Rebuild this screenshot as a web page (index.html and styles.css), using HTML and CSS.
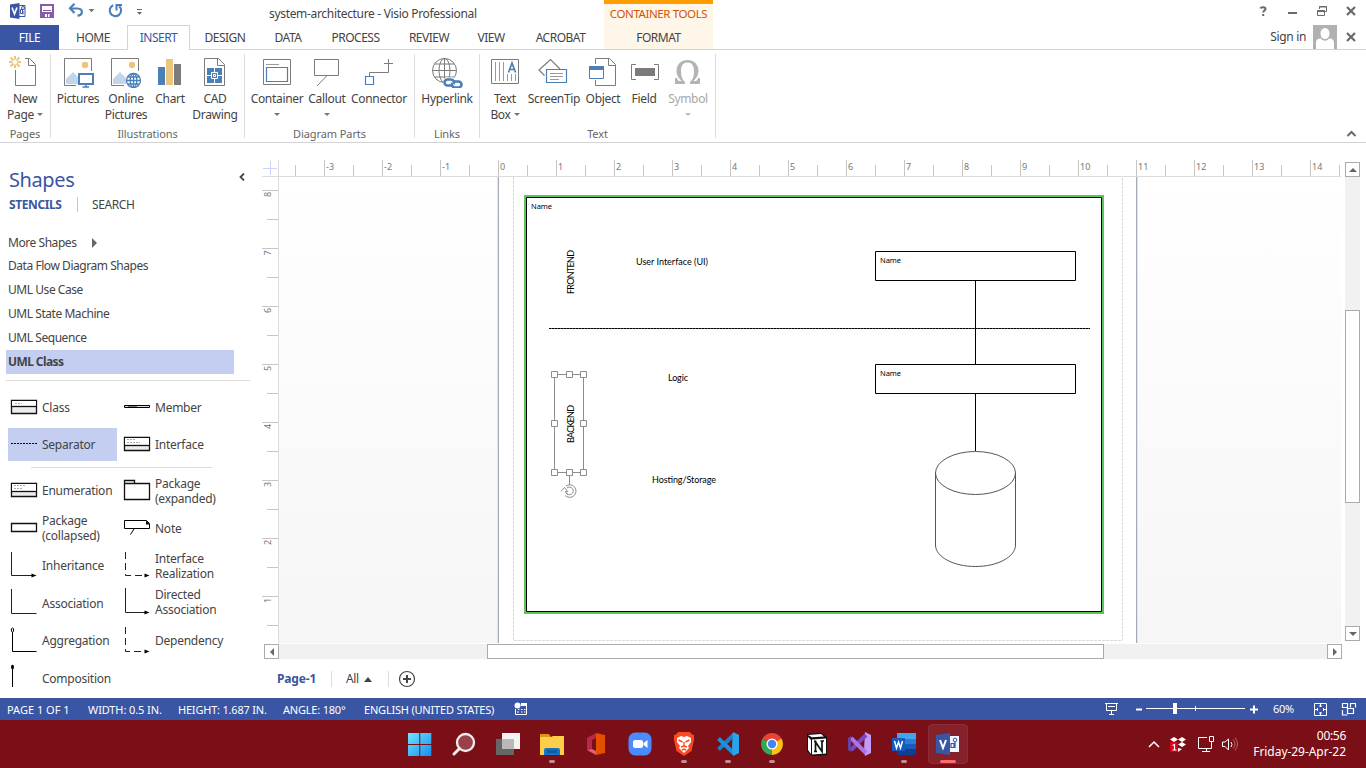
FILE: index.html
```html
<!DOCTYPE html>
<html lang="en">
<head>
<meta charset="utf-8">
<title>system-architecture - Visio Professional</title>
<link rel="stylesheet" href="styles.css">
</head>
<body>
<div class="app">
  <header class="titlebar">
    <div class="quick">
      <svg width="150" height="25" viewBox="0 0 150 25">
        <path d="M18.500 5.500h6.500v11h-6.500z" fill="#fff" stroke="#3955a3"/><path d="M10 4.500l9.500-1.500v16L10 17.500z" fill="#3955a3"/><path d="M12 7.500l2.500 6.500L17 7.500" fill="none" stroke="#fff" stroke-width="1.700"/><circle cx="23" cy="8" r="1.500" fill="none" stroke="#3955a3"/><path d="M20.500 9.500h2v4h-2zM23 14.500V11" fill="none" stroke="#3955a3"/>
        <path d="M41 5h12v12H41z" fill="none" stroke="#8a5bab" stroke-width="2"/><path d="M43 10.500h8" fill="none" stroke="#8a5bab"/><path d="M42 12h10v5H42z" fill="#8a5bab"/><path d="M45 14h2v3h-2zM48 14h1.500v3H48z" fill="#fff"/>
        <path d="M71 8.500h6.500c3.500 0 4.800 2 4.300 4.200-.4 1.800-2 2.800-4.300 3" fill="none" stroke="#4a7fb8" stroke-width="2.200"/><path d="M74.500 3.800L70 8.300l4.500 4.700" fill="none" stroke="#4a7fb8" stroke-width="2.200"/><path d="M88.500 9h6l-3 3.200z" fill="#777"/>
        <path d="M119.200 6.200a5.700 5.700 0 1 1-6-1" fill="none" stroke="#4a7fb8" stroke-width="2.100"/><path d="M116.500 10.500V5h5.500" fill="none" stroke="#4a7fb8" stroke-width="2"/><path d="M137 9.500h5" stroke="#666"/><path d="M137 12h5l-2.500 2.800z" fill="#666"/>
      </svg>
    </div>
    <div class="doc-title">system-architecture - Visio Professional</div>
    <div class="context-head">CONTAINER TOOLS</div>
    <svg class="window-btns" width="110" height="25" viewBox="0 0 110 25" fill="none" stroke="#6a6a6a">
      <path d="M4.500 8.500c.3-1.700 5-2 5 .5 0 1.700-2.300 1.600-2.300 3.500M7.200 14v2" stroke-width="2"/>
      <path d="M32 13h9" stroke-width="2"/>
      <path d="M63.500 9V6.500h7v5h-2.500M63 7h8M61.500 10.500h7v5h-7zM61.500 11.500h7"/>
      <path d="M91 7l8 8M99 7l-8 8" stroke-width="2.200"/>
    </svg>
  </header>
  <nav class="tabs">
    <div class="tab file">FILE</div><div class="tab w68">HOME</div><div class="tab active">INSERT</div><div class="tab w70">DESIGN</div><div class="tab w56">DATA</div><div class="tab w79">PROCESS</div><div class="tab w68">REVIEW</div><div class="tab w56">VIEW</div><div class="tab w83">ACROBAT</div><div class="tab format">FORMAT</div>
    <div class="account"><span>Sign in</span>
      <svg width="24" height="24" viewBox="0 0 24 24"><path fill="#b1b1b1" d="M0 0h24v24H0z"/><ellipse cx="12" cy="8.500" rx="4.500" ry="5.500" fill="#fff"/><path d="M3 24v-6c0-4 3-4.500 5-4.500 2 3 6 3 8 0 2 0 5 .5 5 4.500v6z" fill="#fff"/></svg>
      <svg width="10" height="10" viewBox="0 0 10 10"><path d="M1 1l8 8M9 1L1 9" stroke="#6a6a6a" stroke-width="2.200"/></svg>
    </div>
  </nav>
  <section class="ribbon">
    <div class="group g-pages"><div class="btns">
      <div class="btn b50"><svg class="ico" viewBox="0 0 32 32"><path d="M16 2.500h4.500l6 6v21h-20V14" fill="none" stroke="#7b7b7b"/><path d="M19.500 2.500v7h7" fill="none" stroke="#7b7b7b"/><g stroke="#ecc57c" stroke-width="2"><path d="M6 0v3.500M6 8.500V12M0 6h3.500M8.500 6H12M1.500 1.500l3 3M7.500 7.500l3 3M1.500 10.500l3-3M7.500 4.500l3-3"/></g></svg><span>New<br>Page<i class="down"></i></span></div>
    </div><div class="glabel">Pages</div></div>
    <div class="group g-ill"><div class="btns">
      <div class="btn b50"><svg class="ico" viewBox="0 0 32 32"><path d="M14 29.500H2.500v-27h27V15" fill="none" stroke="#7b7b7b"/><circle cx="23" cy="9" r="3.200" fill="#ecc57c"/><path d="M4 28v-5l7-7 5 5v7z" fill="#c3d5ea"/><path d="M17 18h14v10H17z" fill="#fff" stroke="#4a7fb8" stroke-width="2"/><path d="M24 28v3M20.500 31h6.500" stroke="#4a7fb8" stroke-width="1.500"/></svg><span>Pictures</span></div>
      <div class="btn b46"><svg class="ico" viewBox="0 0 32 32"><path d="M14 29.500H1.500v-27h27V15" fill="none" stroke="#7b7b7b"/><circle cx="22" cy="9" r="3.200" fill="#ecc57c"/><path d="M3 28v-5l7-7 6 6v6z" fill="#c3d5ea"/><g fill="#fff" stroke="#4a7fb8" stroke-width="1.300"><circle cx="23.500" cy="24.500" r="7"/><ellipse cx="23.500" cy="24.500" rx="3.300" ry="7"/><path d="M16.500 24.500h14M23.500 17.500v14M18 21h11M18 28h11"/></g></svg><span>Online<br>Pictures</span></div>
      <div class="btn b42"><svg class="ico" viewBox="0 0 32 32"><path d="M4 11h7v18H4z" fill="#4a7fb8"/><path d="M12 3h7v26h-7z" fill="#ecc57c"/><path d="M20 8h7v21h-7z" fill="#7b7b7b"/></svg><span>Chart</span></div>
      <div class="btn b48"><svg class="ico" viewBox="0 0 32 32"><path d="M5.500 2.500h14l6 6v21h-20z" fill="none" stroke="#7b7b7b"/><path d="M18.500 2.500v7h7" fill="none" stroke="#7b7b7b"/><path d="M8 12h15v15H8z" fill="#4a7fb8"/><path d="M12.500 16.500h6v6h-6zM15.500 12v4M15.500 23v4M8 19.500h4M19 19.500h4" fill="none" stroke="#fff"/><path d="M14.500 18.500h2v2h-2z" fill="#4a7fb8" stroke="#fff"/></svg><span>CAD<br>Drawing</span></div>
    </div><div class="glabel">Illustrations</div></div>
    <div class="group g-parts"><div class="btns">
      <div class="btn b56"><svg class="ico" viewBox="0 0 32 32" fill="none"><path d="M2.500 3.500h27v25h-27z" stroke="#7b7b7b"/><path d="M5 8.500h13" stroke="#9a9a9a"/><path d="M5.500 11.500h21v14h-21z" stroke="#4a7fb8" stroke-width="1.200"/></svg><span>Container<br><i class="down solo"></i></span></div>
      <div class="btn b44"><svg class="ico" viewBox="0 0 32 32" fill="none" stroke="#7b7b7b"><path d="M3.500 3.500h24v16h-24zM16 19.500L6 30"/></svg><span>Callout<br><i class="down solo"></i></span></div>
      <div class="btn b60"><svg class="ico" viewBox="0 0 32 32" fill="none" stroke="#7b7b7b"><path d="M25.500 3v9M21 7.500h9M25.500 12v4.500h-19V20"/><path d="M2.500 20.500h8v8h-8z" stroke="#4a7fb8" stroke-width="1.200"/></svg><span>Connector</span></div>
    </div><div class="glabel">Diagram Parts</div></div>
    <div class="group g-links"><div class="btns">
      <div class="btn b64"><svg class="ico" viewBox="0 0 32 32" fill="none"><g stroke="#7b7b7b"><circle cx="13.500" cy="14.500" r="12"/><ellipse cx="13.500" cy="14.500" rx="5.500" ry="12"/><path d="M13.500 2.500v24M1.500 14.500h24M3.500 8h20M3.500 21h20"/></g><path d="M14 21.500h17l1.500 3v8H12.500v-8z" fill="#fff"/><g stroke="#4a7fb8" stroke-width="2.600"><path d="M21 29.500h-4.500a3 3 0 0 1 0-6h3.500a3 3 0 0 1 2.600 4.500"/><path d="M23 25.500h4.500a3 3 0 0 1 0 6H24a3 3 0 0 1-2.600-4.500"/></g></svg><span>Hyperlink</span></div>
    </div><div class="glabel">Links</div></div>
    <div class="group g-text"><div class="btns">
      <div class="btn b38"><svg class="ico" viewBox="0 0 32 32" fill="none"><path d="M2.500 3.500h27v24h-27z" stroke="#7b7b7b"/><path d="M6.500 6v19M10.500 6v19M14.500 6v19M18.500 18v7M22.500 18v7M26.500 18v7" stroke="#9a9a9a"/><path d="M19.500 16.500L23 7l3.500 9.500M20.500 13.500h5" stroke="#4a7fb8" stroke-width="1.700"/></svg><span>Text<br>Box<i class="down"></i></span></div>
      <div class="btn b60"><svg class="ico" viewBox="0 0 32 32" fill="none"><path d="M6.500 19.500L1 14 12.500 3.500 22 13" stroke="#7b7b7b" stroke-width="1.200"/><path d="M8.500 13.500h20v13h-20z" fill="#fff" stroke="#4a7fb8" stroke-width="1.200"/><path d="M12 17.500h13M12 20.500h13M12 23.500h9" stroke="#9a9a9a"/></svg><span>ScreenTip</span></div>
      <div class="btn b38"><svg class="ico" viewBox="0 0 32 32" fill="none"><path d="M8.500 8V2.500h14l6 6v21h-20V24M21.500 2.500v7h7" stroke="#7b7b7b"/><path d="M2.500 10.500h14v12h-14z" fill="#fff" stroke="#4a7fb8"/><path d="M2 10h15v4H2z" fill="#4a7fb8"/></svg><span>Object</span></div>
      <div class="btn b44"><svg class="ico" viewBox="0 0 32 32" fill="none"><path d="M8 8.500H3.500v15H8M26 8.500h4.500v15H26" stroke="#7b7b7b"/><path d="M7 12h20v8H7z" fill="#7b7b7b"/></svg><span>Field</span></div>
      <div class="btn b44 off"><svg class="ico" viewBox="0 0 32 32"><path d="M3 22h2c.5 2.500 1.500 3 3.500 3h1c-3-3-5-6-5-10C4.500 8.500 9 4 15.500 4S26.500 8.500 26.500 15c0 4-2 7-5 10h1c2 0 3-.5 3.500-3h2v6H18v-2c2.500-2 4-5.500 4-10.500 0-6-2.300-9-6.500-9S9 9.500 9 15.500C9 20.500 10.500 24 13 26v2H3z" fill="#b4b4b4"/></svg><span>Symbol<br><i class="down solo"></i></span></div>
    </div><div class="glabel">Text</div></div>
    <svg class="collapse" width="11" height="8" viewBox="0 0 11 8"><path d="M1.500 6l4-4 4 4" fill="none" stroke="#6a6a6a" stroke-width="2"/></svg>
  </section>

  <main class="work">
    <aside class="shapes">
      <div class="shapes-head"><h1>Shapes</h1><svg width="6" height="8" viewBox="0 0 6 8"><path d="M5 .5L1.500 4 5 7.500" fill="none" stroke="#444" stroke-width="1.800"/></svg></div>
      <div class="switch"><b>STENCILS</b><span>SEARCH</span></div>
      <ul class="stencils"><li class="more">More Shapes<i class="right"></i></li><li>Data Flow Diagram Shapes</li><li>UML Use Case</li><li>UML State Machine</li><li>UML Sequence</li><li class="sel">UML Class</li></ul>
      <div class="masters">
        <div class="m"><svg class="mi" viewBox="0 0 28 28"><path d="M1.500 6.500h25v13h-25z" fill="#ececec" stroke="#111" stroke-width="1.300"/><path d="M2 7h24v5H2z" fill="#fff"/><path d="M1.500 12.500h25" stroke="#111" stroke-width="1.300"/><path d="M5 9.500h7" stroke="#aaa" stroke-dasharray="2 1"/></svg><span>Class</span></div>
        <div class="m"><svg class="mi" viewBox="0 0 28 28"><path d="M1.500 11.500h25v2h-25z" fill="#ddd" stroke="#000"/><path d="M5 12.500h9" stroke="#777"/></svg><span>Member</span></div>
        <div class="m picked"><svg class="mi" viewBox="0 0 28 28"><path d="M1 12.500h26" stroke="#000" stroke-dasharray="2 1"/></svg><span>Separator</span></div>
        <div class="m"><svg class="mi" viewBox="0 0 28 28"><path d="M1.500 6.500h25v13h-25z" fill="#ececec" stroke="#111" stroke-width="1.300"/><path d="M2 7h24v7H2z" fill="#fff"/><path d="M1.500 14.500h25" stroke="#111" stroke-width="1.300"/><path d="M4 8.500h9M4 11.500h13" stroke="#aaa" stroke-dasharray="2 1"/></svg><span>Interface</span></div>
      </div>
      <div class="rule"></div>
      <div class="masters second">
        <div class="m"><svg class="mi" viewBox="0 0 28 28"><path d="M1.500 6.500h25v13h-25z" fill="#ececec" stroke="#111" stroke-width="1.300"/><path d="M2 7h24v7H2z" fill="#fff"/><path d="M1.500 14.500h25" stroke="#111" stroke-width="1.300"/><path d="M4 8.500h11M4 11.500h9" stroke="#aaa" stroke-dasharray="2 1"/></svg><span>Enumeration</span></div>
        <div class="m"><svg class="mi" viewBox="0 0 28 28"><path d="M1.500 6.500h25v16h-25zM1.500 6.500v-3h10v3" fill="#fff" stroke="#111" stroke-width="1.300"/></svg><span>Package<br>(expanded)</span></div>
        <div class="m"><svg class="mi" viewBox="0 0 28 28"><path d="M1.500 9.500h25v8h-25z" fill="#fff" stroke="#111" stroke-width="1.300"/></svg><span>Package<br>(collapsed)</span></div>
        <div class="m"><svg class="mi" viewBox="0 0 28 28"><path d="M1.500 6.500h22l3 3v5h-25zM11 15l-3.500 5.500" fill="none" stroke="#000"/><path d="M23 6.500l4 4h-4z"/></svg><span>Note</span></div>
        <div class="m"><svg class="mi" viewBox="0 0 28 28"><path d="M1.500 0v23.500h21" fill="none" stroke="#222"/><path d="M21.500 21.500l5 2-5 2z"/></svg><span>Inheritance</span></div>
        <div class="m"><svg class="mi" viewBox="0 0 28 28"><path d="M2.500 0v23.500h20" fill="none" stroke="#222" stroke-dasharray="7 4"/><path d="M21.500 21.500l5 2-5 2z"/></svg><span>Interface<br>Realization</span></div>
        <div class="m"><svg class="mi" viewBox="0 0 28 28"><path d="M1.500 0v24.500h25" fill="none" stroke="#222"/></svg><span>Association</span></div>
        <div class="m up1"><svg class="mi" viewBox="0 0 28 28"><path d="M2.500 0v24.500h20" fill="none" stroke="#222"/><path d="M21.500 22.500l5 2-5 2z"/></svg><span>Directed<br>Association</span></div>
        <div class="m"><svg class="mi" viewBox="0 0 28 28"><path d="M2.500 5v19.500h24" fill="none" stroke="#000"/><ellipse cx="2.500" cy="3" rx="1.200" ry="2" fill="#fff" stroke="#000"/></svg><span>Aggregation</span></div>
        <div class="m"><svg class="mi" viewBox="0 0 28 28"><path d="M2.500 0v24.500h20" fill="none" stroke="#222" stroke-dasharray="7 4"/><path d="M21.500 22.500l5 2-5 2z"/></svg><span>Dependency</span></div>
        <div class="m"><svg class="mi" viewBox="0 0 28 28"><path d="M2.500 4v19" stroke="#000"/><ellipse cx="2.500" cy="3" rx="1.500" ry="2.300"/></svg><span>Composition</span></div>
      </div>
    </aside>

    <section class="drawing">
      <svg class="corner" viewBox="0 0 17 17" fill="none"><path d="M1 8.500h14M8.500 1v14" stroke="#ccd3fa"/><path d="M0 16.500h17M16.500 0v17" stroke="#dcdcdc"/></svg>
      <svg class="ruler-h" viewBox="279 160 1062 17">
        <defs><pattern id="th" x="324" y="160" width="58" height="17" patternUnits="userSpaceOnUse"><path d="M.5 0v16M29.500 5v11" stroke="#c6c6c6"/></pattern></defs>
        <path d="M279 160h1062v17H279z" fill="url(#th)"/><path d="M279 176.500h1062" stroke="#dcdcdc"/>
        <g class="rnum"><text x="326" y="170">-3</text><text x="384" y="170">-2</text><text x="442" y="170">-1</text><text x="500" y="170">0</text><text x="558" y="170">1</text><text x="616" y="170">2</text><text x="674" y="170">3</text><text x="732" y="170">4</text><text x="790" y="170">5</text><text x="848" y="170">6</text><text x="906" y="170">7</text><text x="964" y="170">8</text><text x="1022" y="170">9</text><text x="1080" y="170">10</text><text x="1138" y="170">11</text><text x="1196" y="170">12</text><text x="1254" y="170">13</text><text x="1312" y="170">14</text></g>
      </svg>
      <svg class="ruler-v" viewBox="262 177 17 466">
        <defs><pattern id="tv" x="262" y="190" width="17" height="58" patternUnits="userSpaceOnUse"><path d="M0 .5h16M5 29.500h11" stroke="#c6c6c6"/></pattern></defs>
        <path d="M262 177h17v466h-17z" fill="url(#tv)"/><path d="M278.500 177v466" stroke="#dcdcdc"/>
        <g class="rnum"><text transform="translate(270.500 197) rotate(-90)">8</text><text transform="translate(270.500 255.500) rotate(-90)">7</text><text transform="translate(270.500 313) rotate(-90)">6</text><text transform="translate(270.500 371) rotate(-90)">5</text><text transform="translate(270.500 429) rotate(-90)">4</text><text transform="translate(270.500 487) rotate(-90)">3</text><text transform="translate(270.500 545) rotate(-90)">2</text><text transform="translate(270.500 603) rotate(-90)">1</text></g>
      </svg>
      <svg class="canvas" viewBox="279 177 1062 466">
        <defs><linearGradient id="bg" x2="0" y2="1"><stop stop-color="#fff"/><stop offset="1" stop-color="#f6f6f6"/></linearGradient></defs>
        <path d="M279 177h1062v466H279z" fill="url(#bg)"/>
        <path d="M497.500 177v466M1137.500 177v466" stroke="#e3e5e8"/>
        <path d="M498 177h638v466H498z" fill="#fff"/>
        <path d="M498.500 177v466M1136.500 177v466" stroke="#a3abb5"/>
        <path d="M513.500 177v463.500h609V177" fill="none" stroke="#dadada" stroke-dasharray="3 1"/>
        <path d="M525 196h578v417H525z" fill="#fff" stroke="#5bc45b" stroke-width="2"/>
        <path d="M526.500 197.500h575v414h-575z" fill="none" stroke="#000"/>
        <path d="M549 328.500h541" stroke="#555"/><path d="M549 328.500h541" stroke="#000" stroke-dasharray="2 1"/>
        <path d="M975.500 280v84M975.500 394v57" stroke="#000"/>
        <path d="M875.500 251.500h200v29h-200zM875.500 364.500h200v29h-200z" fill="#fff" stroke="#000"/>
        <g fill="none" stroke="#555"><ellipse cx="975.500" cy="473" rx="40" ry="21.500"/><path d="M935.500 473v72c0 11.900 17.900 21.500 40 21.500s40-9.600 40-21.500v-72"/></g>
        <g class="dtext"><text x="531" y="209" class="nm" textLength="21">Name</text><text x="880" y="263" class="nm" textLength="21">Name</text><text x="880" y="376" class="nm" textLength="21">Name</text>
        <text x="636" y="265" textLength="72">User Interface (UI)</text><text x="668" y="381" textLength="20">Logic</text><text x="652" y="483" textLength="64">Hosting/Storage</text>
        <text transform="translate(574 294) rotate(-90)" textLength="44">FRONTEND</text><text transform="translate(574 443) rotate(-90)" textLength="38">BACKEND</text></g>
        <g fill="none" stroke="#8d8d8d"><path d="M554.500 374.500h29v98h-29zM569.500 475v10"/><g fill="#fff"><path d="M551.500 371.500h6v6h-6zM566.500 371.500h6v6h-6zM580.500 371.500h6v6h-6zM551.500 420.500h6v6h-6zM580.500 420.500h6v6h-6zM551.500 469.500h6v6h-6zM566.500 469.500h6v6h-6zM580.500 469.500h6v6h-6z"/></g><path d="M566 486a6.300 6.300 0 1 1-.8 9.500M567 488a3.800 3.800 0 1 1-1 4.500M560.800 491.500l3.700-4 3.200 4h-2.200q.5 2.500 2.500 3"/></g>
      </svg>
      <div class="vscroll"><div class="sb"><i class="a up"></i></div><div class="vthumb"></div><div class="sb"><i class="a dn"></i></div></div>
      <div class="hscroll"><div class="sb"><i class="a lf"></i></div><div class="hthumb"></div><div class="sb"><i class="a rt"></i></div></div>
      <div class="pages"><b>Page-1</b><span class="all">All<i></i></span><svg width="18" height="18" viewBox="0 0 18 18" fill="none" stroke="#444"><circle cx="9" cy="9" r="7.500" stroke-width="1.200"/><path d="M9 5v8M5 9h8" stroke-width="2"/></svg></div>
    </section>
  </main>

  <footer class="status">
    <span class="s1">PAGE 1 OF 1</span><span class="s2">WIDTH: 0.5 IN.</span><span class="s3">HEIGHT: 1.687 IN.</span><span class="s4">ANGLE: 180°</span><span class="s5">ENGLISH (UNITED STATES)</span>
    <svg width="14" height="14" viewBox="0 0 14 14"><circle cx="3.500" cy="3.500" r="3" fill="#fff"/><path d="M7 1h6v3H7z" fill="#fff"/><path d="M1.500 7v5.500h11V3M4 7.500h1.500M7 7.500h1.500M10 7.500h1.500M3 10h2M7 10h1.500M10 10h1.500" fill="none" stroke="#fff"/></svg>
    <svg class="zoombar" width="262" height="22" viewBox="1104 698 262 22" fill="none" stroke="#fff"><path d="M1105 703.500h13M1106.500 704v6.500h10V704M1108 706.500h7M1111.500 711v3.500M1109 714.500h5"/><path d="M1136 709.500h6M1250 709.500h8M1254 705.500v8" stroke-width="2"/><path d="M1146 708.500h99M1195.500 706v5"/><path d="M1173 703h4v11h-4z" fill="#fff" stroke="none"/><text x="1273" y="713" textLength="21">60%</text><path d="M1314.500 703.500h12v12h-12zM1320.500 704v3M1320.500 712v3M1315 709.500h3M1323 709.500h3M1319 706h3M1319 713h3M1317.500 708v3M1323.500 708v3"/><path d="M1342.500 707.500v-4h5v4zM1350.500 707.500v-4h5v4M1347.500 708.500h6v5h-6zM1342.500 710v5h5" stroke-width="1.200"/></svg>
  </footer>

  <div class="taskbar">
    <div class="dock">
      <div class="app-btn"><svg viewBox="0 0 24 24"><defs><linearGradient id="win" x2="1" y2="1"><stop stop-color="#6de6ff"/><stop offset="1" stop-color="#168df0"/></linearGradient></defs><path d="M0 1h11.300v11H0zM12.300 1h11v11h-11zM0 13h11.300v11H0zM12.300 13h11v11h-11z" fill="url(#win)"/></svg></div>
      <div class="app-btn"><svg viewBox="0 0 24 24"><circle cx="13.500" cy="10.500" r="8.500" fill="#9a4049" stroke="#eee" stroke-width="2.300"/><path d="M7.500 16.500L2 22" stroke="#eee" stroke-width="3" stroke-linecap="round"/></svg></div>
      <div class="app-btn"><svg viewBox="0 0 24 24"><path d="M6 1h18v16H6z" fill="#f3f3f3"/><path d="M0 7h18v16H0z" fill="#666"/><path d="M6 7h12v10H6z" fill="#b9b9b9"/></svg></div>
      <div class="app-btn run"><svg viewBox="0 0 24 24"><path d="M0 2h9l2 3H0z" fill="#d99a10"/><path d="M0 5h11l2-1h11v19H0z" fill="#fdcf48"/><path d="M4 23v-5q0-2 2-2h12q2 0 2 2v5z" fill="#1673c7"/><path d="M7 18h10v3H7z" fill="#105b9d"/></svg></div>
      <div class="app-btn"><svg viewBox="0 0 24 24"><path d="M3 6l9-5v5L8 8v9l-5 1z" fill="#b52a48"/><path d="M12 1l9 2v18l-9 2z" fill="#e35100"/><path d="M3 18l5-1 4 2v4z" fill="#e0607c"/></svg></div>
      <div class="app-btn"><svg viewBox="0 0 24 24"><rect x=".5" y=".5" width="23" height="23" rx="7" fill="#4a8cff"/><rect x="5" y="8" width="10" height="8" rx="2" fill="#fff"/><path d="M15.500 11l4-3v8l-4-3z" fill="#fff"/></svg></div>
      <div class="app-btn run"><svg viewBox="0 0 24 24"><path d="M6 0h12l2 2.500 2 .5v5l-2.500 11L12 24l-7.500-5L2 8V3l2-.5z" fill="#fb4a20"/><path d="M5 6l4-2 3 1 3-1 4 2 0 4-3 4 1 2-5 5-5-5 1-2-3-4z" fill="#fff"/><path d="M6.500 8l4 2M17.500 8l-4 2M12 10v5M9 15l3-1 3 1M10 18l2-1 2 1" fill="none" stroke="#fb4a20" stroke-width="1.400"/></svg></div>
      <div class="app-btn run"><svg viewBox="0 0 24 24"><path d="M17 0l6 3v18l-6 3-1-6z" fill="#28a4ea"/><path d="M17.500 3L2.500 17.500" stroke="#1681cc" stroke-width="4"/><path d="M17.500 21L2.500 6.500" stroke="#1b91da" stroke-width="4"/><path d="M17.500 1v22" stroke="#28a4ea" stroke-width="2"/></svg></div>
      <div class="app-btn run"><svg viewBox="0 0 24 24"><path d="M12 12L2.500 6.500A11 11 0 0 1 21.500 6.500z" fill="#ea4335"/><path d="M12 12l9.500-5.500A11 11 0 0 1 12 23z" fill="#fbc116"/><path d="M12 12v11A11 11 0 0 1 2.500 6.500z" fill="#34a853"/><circle cx="12" cy="12" r="5.500" fill="#fff"/><circle cx="12" cy="12" r="4.200" fill="#4285f4"/></svg></div>
      <div class="app-btn"><svg viewBox="0 0 24 24"><path d="M3 2l14-1 6 4v18l-15 1-5-5z" fill="#111"/><path d="M4 3l13-1 3 2.500-12 .8z" fill="#fff"/><path d="M4 5l3 3v14l-3-4zM8 7.500l14-1v15l-14 1z" fill="#fff"/><path d="M11.500 19.500V10l6.500 9.500V9M10 9.500h2.500M16.500 9h3.500M10 19.500h3" fill="none" stroke="#111" stroke-width="1.700"/></svg></div>
      <div class="app-btn"><svg viewBox="0 0 24 24"><path d="M17 0l6 3v18l-6 3-1-6z" fill="#c39af5"/><path d="M18 3L3 18" stroke="#7a47bd" stroke-width="4"/><path d="M3 6l15 15" stroke="#a675e8" stroke-width="4"/><path d="M0 6l3-2v16l-3-2z" fill="#6940a5"/></svg></div>
      <div class="app-btn run"><svg viewBox="0 0 24 24"><path d="M5 1h19v6H5z" fill="#41a5ee"/><path d="M5 7h19v5H5z" fill="#2b7cd3"/><path d="M5 12h19v5H5z" fill="#185abd"/><path d="M5 17h19v6H5z" fill="#103f91"/><path d="M0 6h13v13H0z" fill="#185abd"/><path d="M2.500 9l2 7 2-6 2 6 2-7" fill="none" stroke="#fff" stroke-width="1.500"/></svg></div>
      <div class="app-btn current"><svg viewBox="0 0 24 24"><path d="M12 4h11v16H12z" fill="#f4f6ff"/><path d="M0 3l14-2v22L0 21z" fill="#3955a3"/><path d="M4 8l3 8 3-8" fill="none" stroke="#fff" stroke-width="2"/><circle cx="19" cy="8" r="1.800" fill="none" stroke="#3955a3"/><path d="M19 10v5.500h-1M15 11.500h3v4h-3z" fill="none" stroke="#3955a3" stroke-width="1.200"/></svg></div>
    </div>
    <svg class="tray" width="96" height="48" viewBox="1146 720 96 48" fill="none" stroke="#fff"><path d="M1149 747l5-5 5 5" stroke-width="1.500"/><path d="M1174 737l4 2.500-4 2.500-4-2.500zM1182 737l4 2.500-4 2.500-4-2.500zM1182 742l4 2.500-4 2.500-4-2.500zM1178 748l4 1-4 3z" fill="#fff" stroke="none"/><path d="M1170 742h8v10h-8z" fill="#d9001b" stroke="none"/><path d="M1172.500 745.500l2-1v5.500M1172.500 750h4" stroke-width="1.200"/><path d="M1207 737.500h-8.500v11h13V743M1202 751.500h8M1206.500 749v2.500M1209.500 736.500h4v5h-4zM1211.500 741.500v5"/><path d="M1222.500 742v4.500h2.500l3.500 3.500v-11l-3.500 3z"/><path d="M1231 742q2 2.500 0 5"/><path d="M1233 739.500q4 4.500 0 9M1235 737.500q5 6.500 0 13" stroke="#b8646b"/></svg>
    <div class="clock"><span>00:56</span><br>Friday-29-Apr-22</div>
  </div>
</div>
</body>
</html>
```
FILE: styles.css
```css
* { box-sizing: border-box; margin: 0; padding: 0; }
body { font-family: "Noto Sans", "Open Sans", sans-serif; font-size: 12px; letter-spacing: -0.32px; color: #444; background: #fff; overflow: hidden; }
svg { display: block; flex: none; }
.app { width: 1366px; height: 768px; display: flex; flex-direction: column; }

.titlebar { height: 25px; display: flex; flex: none; }
.quick { width: 150px; }
.doc-title { width: 454px; padding-left: 119px; line-height: 27px; white-space: nowrap; }
.context-head { width: 109px; background: #fff6ea; border-top: 4px solid #ff9c00; color: #d35400; text-align: center; line-height: 19px; font-size: 11.5px; letter-spacing: -0.4px; }
.window-btns { margin-left: auto; }

.tabs { height: 25px; display: flex; flex: none; border-bottom: 1px solid #d4d4d4; }
.tab { text-align: center; line-height: 25px; height: 24px; letter-spacing: -0.5px; }
.file { width: 59px; background: #3955a3; color: #fff; height: 25px; }
.active { width: 63px; border: 1px solid #d4d4d4; border-bottom: 0; background: #fff; height: 25px; color: #3955a3; line-height: 23px; }
.w68 { width: 68px; }
.w70 { width: 70px; }
.w56 { width: 56px; }
.w79 { width: 79px; }
.w83 { width: 83px; }
.format { width: 109px; background: #fff6ea; margin-left: 2px; }
.account { margin-left: auto; display: flex; align-items: center; line-height: 24px; padding-right: 10px; }
.account span { margin-right: 7px; }
.account svg + svg { margin-left: 9px; }

.ribbon { height: 93px; display: flex; flex: none; border-bottom: 1px solid #d4d4d4; padding: 4px 0 5px; }
.group { height: 84px; border-right: 1px solid #dcdcdc; display: flex; flex-direction: column; }
.btns { display: flex; height: 72px; flex: none; padding-top: 2px; }
.btn { display: flex; flex-direction: column; align-items: center; text-align: center; line-height: 16px; white-space: nowrap; }
.btn span { margin-top: 3px; }
.ico { width: 32px; height: 32px; }
.glabel { text-align: center; color: #666; font-size: 11px; letter-spacing: -0.1px; height: 16px; line-height: 16px; }
.g-pages { width: 51px; }
.g-ill { width: 194px; }
.g-ill .btns { padding-left: 2px; }
.g-parts { width: 170px; }
.g-parts .btns { padding-left: 4px; }
.g-links { width: 65px; }
.g-text { width: 236px; }
.g-text .btns { padding-left: 6px; }
.b38 { width: 38px; }
.b42 { width: 42px; }
.b44 { width: 44px; }
.b46 { width: 46px; }
.b48 { width: 48px; }
.b50 { width: 50px; }
.b56 { width: 56px; }
.b60 { width: 60px; }
.b64 { width: 64px; }
.off { color: #a6a6a6; }
.down { display: inline-block; border: 3px solid transparent; border-top-color: #777; border-bottom: 0; margin-left: 3px; vertical-align: 3px; }
.off .down { border-top-color: #bbb; }
.solo { margin-left: 0; }
.collapse { margin: 76px 9px 0 auto; }

.work { height: 555px; flex: none; display: flex; }
.shapes { width: 262px; padding-top: 24px; }
.shapes-head { display: flex; height: 26px; padding: 0 17px 0 9px; }
.shapes-head svg { margin: 6px 0 0 auto; }
h1 { font-size: 20px; font-weight: 400; color: #3955a3; line-height: 26px; letter-spacing: -0.4px; }
.switch { display: flex; height: 23px; line-height: 23px; padding-left: 9px; letter-spacing: -0.4px; }
.switch b { color: #3955a3; width: 69px; border-right: 1px solid #c6c6c6; height: 15px; margin-top: 4px; line-height: 15px; white-space: nowrap; }
.switch span { padding-left: 14px; }
.stencils { list-style: none; width: 244px; margin-left: 6px; padding: 14px 0 6px; border-bottom: 1px solid #dcdcdc; letter-spacing: -0.45px; }
.stencils li { height: 24px; line-height: 24px; padding-left: 2px; width: 228px; }
.stencils .more { line-height: 26px; }
.stencils .sel { background: #c3cef1; font-weight: 700; letter-spacing: -0.6px; }
.right { display: inline-block; border: 5px solid transparent; border-left-color: #666; border-right: 0; margin-left: 16px; vertical-align: -1px; }
.masters { display: grid; grid-template-columns: 113px 113px; grid-auto-rows: 37px; padding: 8px 0 0 8px; letter-spacing: -0.25px; }
.m { display: flex; align-items: center; line-height: 15px; }
.mi { width: 28px; height: 28px; margin: 0 4px 0 2px; }
.picked { background: #c3cef1; width: 109px; margin: 2px 0; }
.up1 { padding-bottom: 2px; }
.rule { width: 181px; height: 1px; background: #dcdcdc; margin: 4px 0 0 31px; }
.second { padding-top: 4px; grid-auto-rows: 37.5px; }

.drawing { width: 1104px; padding-top: 17px; display: grid; grid-template-columns: 17px 1062px 25px; grid-template-rows: 17px 466px 16px 39px; }
.corner { width: 17px; height: 17px; }
.ruler-h { width: 1062px; height: 17px; }
.ruler-v { width: 17px; height: 466px; grid-row: 2; grid-column: 1; }
.canvas { width: 1062px; height: 466px; }
.rnum text { font: 9px "Noto Sans", sans-serif; letter-spacing: 0; fill: #777; }
.dtext text { font: 9px Lato, sans-serif; letter-spacing: 0; fill: #000; }
.dtext .nm { font: 7.5px "Noto Sans", sans-serif; }
.vscroll { grid-column: 3; grid-row: 1 / 3; margin: 2px 0 2px 4px; width: 15px; background: #f1f1f1; display: flex; flex-direction: column; }
.sb { width: 15px; height: 15px; border: 1px solid #ababab; background: #fff; display: flex; align-items: center; justify-content: center; flex: none; }
.vthumb { height: 193px; margin: 133px 0 123px; border: 1px solid #ababab; background: #fff; }
.hscroll { grid-column: 1 / 4; margin: 1px 24px 0 2px; height: 15px; background: #f1f1f1; display: flex; }
.hthumb { width: 617px; margin: 0 223px 0 208px; border: 1px solid #ababab; background: #fff; }
.a { border: 4px solid transparent; }
.up { border-bottom-color: #666; border-top: 0; }
.dn { border-top-color: #666; border-bottom: 0; }
.lf { border-right-color: #666; border-left: 0; }
.rt { border-left-color: #666; border-right: 0; }
.pages { grid-column: 1 / 4; display: flex; align-items: center; height: 39px; padding: 1px 0 0 15px; }
.pages b { color: #3955a3; width: 55px; border-right: 1px solid #dcdcdc; line-height: 16px; letter-spacing: -0.15px; }
.all { width: 57px; padding-left: 14px; border-right: 1px solid #dcdcdc; line-height: 16px; margin-right: 9px; }
.all i { display: inline-block; border: 4px solid transparent; border-bottom: 5px solid #444; border-top: 0; margin-left: 5px; vertical-align: 1px; }

.status { height: 22px; flex: none; display: flex; align-items: center; background: #3955a3; color: #fff; font-size: 11px; padding-left: 7px; white-space: nowrap; letter-spacing: -0.2px; }
.s1 { width: 81px; letter-spacing: 0; }
.s2 { width: 90px; letter-spacing: -0.1px; }
.s3 { width: 105px; }
.s4 { width: 81px; }
.s5 { width: 150px; }
.zoombar { margin-left: auto; }
.zoombar text { font: 11px "Noto Sans", sans-serif; fill: #fff; stroke: none; }

.taskbar { height: 48px; flex: none; background: #7a0f18; display: flex; align-items: center; }
.dock { display: flex; gap: 4px; margin-left: 400px; height: 40px; }
.app-btn { width: 40px; height: 40px; padding: 8px 0 0 8px; border-radius: 4px; display: flex; flex-direction: column; }
.app-btn svg { width: 24px; height: 24px; }
.run::after { content: ""; width: 6px; height: 3px; border-radius: 2px; background: #c48a8e; margin: 4px 0 0 9px; }
.current { background: #84212a; border: 1px solid #8c2e37; padding: 7px 0 0 7px; }
.current::after { content: ""; width: 16px; height: 3px; border-radius: 2px; background: #ff6b6b; margin: 4px 0 0 4px; }
.tray { margin-left: auto; }
.clock { color: #fff; text-align: right; line-height: 16px; width: 104px; margin-right: 20px; white-space: nowrap; letter-spacing: -0.05px; }
.clock span { letter-spacing: -0.3px; }
```
